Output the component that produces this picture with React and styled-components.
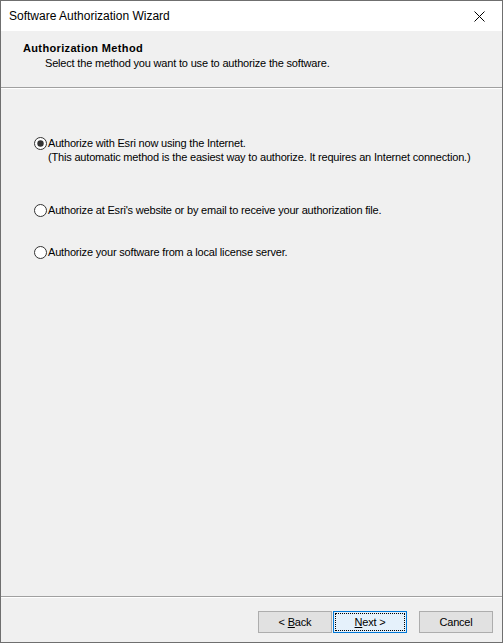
import React from "react";
import styled, { createGlobalStyle } from "styled-components";

const GlobalStyle = createGlobalStyle`
  html, body {
    margin: 0;
    padding: 0;
    background: #ffffff;
  }
`;

const options = [
  {
    label: "Authorize with Esri now using the Internet.",
    note: "(This automatic method is the easiest way to authorize. It requires an Internet connection.)",
    checked: true,
  },
  { label: "Authorize at Esri's website or by email to receive your authorization file." },
  { label: "Authorize your software from a local license server." },
];

function Radio({ checked }) {
  return (
    <svg width="13" height="13" viewBox="0 0 13 13">
      <circle cx="6.5" cy="6.5" r="6" fill="#ffffff" stroke="#333333" strokeWidth="1" />
      {checked && <circle cx="6.5" cy="6.5" r="3.2" fill="#333333" />}
    </svg>
  );
}

export default function App() {
  return (
    <>
      <GlobalStyle />
      <Window>
        <TitleBar>
          <Title>Software Authorization Wizard</Title>
          <Close>
            <svg width="11" height="11" viewBox="0 0 11 11">
              <path d="M0.5 0.5 L10.5 10.5 M10.5 0.5 L0.5 10.5" stroke="#000" strokeWidth="1" />
            </svg>
          </Close>
        </TitleBar>
        <Header>
          <HeadTitle>Authorization Method</HeadTitle>
          <HeadSub>Select the method you want to use to authorize the software.</HeadSub>
        </Header>
        <Body>
          {options.map((o, i) => (
            <Option key={i} $gap={i === 0 ? 0 : i === 1 ? 39 : 28}>
              <RadioWrap>
                <Radio checked={o.checked} />
              </RadioWrap>
              <div>
                <Label>{o.label}</Label>
                {o.note && <Label>{o.note}</Label>}
              </div>
            </Option>
          ))}
        </Body>
        <Footer>
          <Button>
            <span>
              &lt; <u>B</u>ack
            </span>
          </Button>
          <Button $default>
            <Focus>
              <span>
                <u>N</u>ext &gt;
              </span>
            </Focus>
          </Button>
          <Button $space>Cancel</Button>
        </Footer>
      </Window>
    </>
  );
}

const Window = styled.div`
  box-sizing: border-box;
  width: 503px;
  height: 643px;
  border: 1px solid #6f6f6f;
  display: flex;
  flex-direction: column;
  background: #f0f0f0;
  font-family: "Liberation Sans", Arial, sans-serif;
  font-size: 11px;
  letter-spacing: -0.18px;
  color: #000;
`;

const TitleBar = styled.div`
  height: 30px;
  background: #ffffff;
  display: flex;
  align-items: center;
  justify-content: space-between;
  padding: 0 0 0 8px;
`;

const Title = styled.div`
  font-family: "Liberation Sans", Arial, sans-serif;
  font-size: 12px;
  letter-spacing: 0;
  color: #000;
  margin-top: -1px;
`;

const Close = styled.div`
  width: 46px;
  height: 30px;
  display: flex;
  align-items: center;
  justify-content: center;
`;

const Header = styled.div`
  height: 57px;
  border-bottom: 1px solid #a0a0a0;
  box-shadow: 0 1px 0 #ffffff;
  padding: 10px 0 0 22px;
  box-sizing: border-box;
`;

const HeadTitle = styled.div`
  font-weight: bold;
  letter-spacing: 0.35px;
  line-height: 14px;
`;

const HeadSub = styled.div`
  margin: 1px 0 0 22px;
  line-height: 14px;
`;

const Body = styled.div`
  flex: 1;
  padding: 48px 0 0 33px;
  display: flex;
  flex-direction: column;
`;

const Option = styled.div`
  display: flex;
  align-items: flex-start;
  margin-top: ${(p) => p.$gap}px;
`;

const RadioWrap = styled.div`
  width: 14px;
  padding-top: 1px;
  display: flex;
`;

const Label = styled.div`
  line-height: 14px;
`;

const Footer = styled.div`
  height: 46px;
  box-sizing: border-box;
  border-top: 1px solid #a0a0a0;
  box-shadow: inset 0 1px 0 #ffffff;
  display: flex;
  align-items: flex-start;
  padding: 14px 0 0 257px;
`;

const Button = styled.button`
  box-sizing: border-box;
  width: 74px;
  height: 22px;
  margin-left: ${(p) => (p.$space ? "11px" : "0")};
  margin-right: 1px;
  border: 1px solid ${(p) => (p.$default ? "#0078d7" : "#adadad")};
  background: ${(p) => (p.$default ? "#e5f1fb" : "#e1e1e1")};
  font-family: "Liberation Sans", Arial, sans-serif;
  font-size: 11px;
  letter-spacing: -0.2px;
  color: #000;
  padding: ${(p) => (p.$default ? "1px" : "0")};
  display: flex;
  align-items: center;
  justify-content: center;
  u {
    text-decoration: underline;
  }
`;

const Focus = styled.span`
  flex: 1;
  align-self: stretch;
  border: 1px dotted #000;
  display: flex;
  align-items: center;
  justify-content: center;
`;
